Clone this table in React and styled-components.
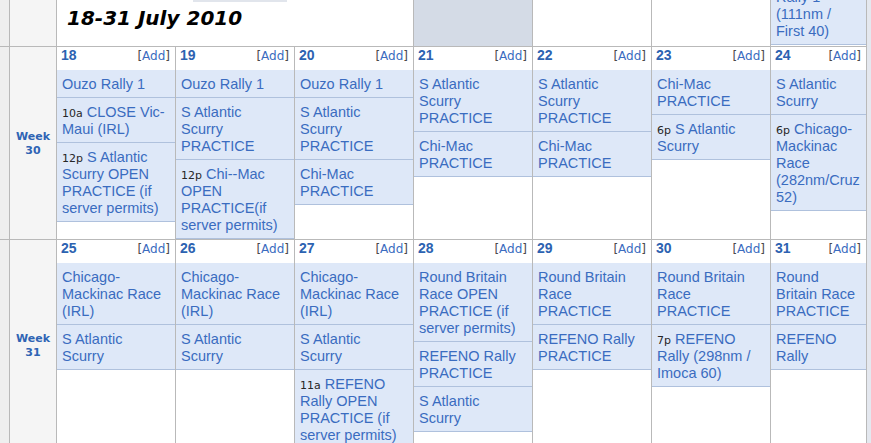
import React from "react";
import styled, { createGlobalStyle } from "styled-components";

const GlobalStyle = createGlobalStyle`
  html, body {
    margin: 0;
    padding: 0;
    background: #e4e8ef;
    overflow: hidden;
  }
`;

const weeks = [
  {
    label: "30",
    days: [
      { n: 18, ev: [["", "Ouzo Rally 1"], ["10a", "CLOSE Vic-Maui (IRL)"], ["12p", "S Atlantic Scurry OPEN PRACTICE (if server permits)"]] },
      { n: 19, ev: [["", "Ouzo Rally 1"], ["", "S Atlantic Scurry PRACTICE"], ["12p", "Chi--Mac OPEN PRACTICE(if server permits)"]] },
      { n: 20, ev: [["", "Ouzo Rally 1"], ["", "S Atlantic Scurry PRACTICE"], ["", "Chi-Mac PRACTICE"]] },
      { n: 21, ev: [["", "S Atlantic Scurry PRACTICE"], ["", "Chi-Mac PRACTICE"]] },
      { n: 22, ev: [["", "S Atlantic Scurry PRACTICE"], ["", "Chi-Mac PRACTICE"]] },
      { n: 23, ev: [["", "Chi-Mac PRACTICE"], ["6p", "S Atlantic Scurry"]] },
      { n: 24, ev: [["", "S Atlantic Scurry"], ["6p", "Chicago-Mackinac Race (282nm/Cruz 52)"]] },
    ],
  },
  {
    label: "31",
    days: [
      { n: 25, ev: [["", "Chicago-Mackinac Race (IRL)"], ["", "S Atlantic Scurry"]] },
      { n: 26, ev: [["", "Chicago-Mackinac Race (IRL)"], ["", "S Atlantic Scurry"]] },
      { n: 27, ev: [["", "Chicago-Mackinac Race (IRL)"], ["", "S Atlantic Scurry"], ["11a", "REFENO Rally OPEN PRACTICE (if server permits)"]] },
      { n: 28, ev: [["", "Round Britain Race OPEN PRACTICE (if server permits)"], ["", "REFENO Rally PRACTICE"], ["", "S Atlantic Scurry"]] },
      { n: 29, ev: [["", "Round Britain Race PRACTICE"], ["", "REFENO Rally PRACTICE"]] },
      { n: 30, ev: [["", "Round Britain Race PRACTICE"], ["7p", "REFENO Rally (298nm / Imoca 60)"]] },
      { n: 31, ev: [["", "Round Britain Race PRACTICE"], ["", "REFENO Rally"]] },
    ],
  },
];

export default function App() {
  return (
    <>
      <GlobalStyle />
      <Calendar>
        {/* tail of the previous week */}
        <Gutter />
        <WeekCell />
        <TitleCell>
          <TabStub />
          <Title>18-31 July 2010</Title>
        </TitleCell>
        <Blank $muted />
        <Blank />
        <Blank />
        <DayCell $bottom>
          <Event $narrow>
            <Time>6p</Time> Ouzo Rally 1 (111nm / First 40)
          </Event>
        </DayCell>

        {weeks.map((w) => (
          <React.Fragment key={w.label}>
            <Gutter />
            <WeekCell>
              <WeekLabel>
                Week
                <br />
                {w.label}
              </WeekLabel>
            </WeekCell>
            {w.days.map((d, i) => {
              const narrow = i === 6;
              return (
                <DayCell key={d.n}>
                  <DayHead>
                    <DayNum>{d.n}</DayNum>
                    <Add>
                      [<span>Add</span>]
                    </Add>
                  </DayHead>
                  {d.ev.map(([t, txt], j) => (
                    <Event key={j} $narrow={narrow}>
                      {t && <Time>{t}</Time>}
                      {t ? " " : ""}
                      {txt}
                    </Event>
                  ))}
                </DayCell>
              );
            })}
          </React.Fragment>
        ))}
      </Calendar>
    </>
  );
}

const Calendar = styled.div`
  display: grid;
  grid-template-columns: 9px 46px repeat(6, 118px) 95px;
  grid-template-rows: 46px auto auto;
  gap: 1px;
  background: #b9b9b9;
  padding-right: 1px;
  width: max-content;
`;

const Gutter = styled.div`
  background: #efefef;
`;

const WeekCell = styled.div`
  background: #f5f5f5;
  display: flex;
  align-items: center;
  justify-content: center;
`;

const WeekLabel = styled.div`
  font: bold 11px/14px "DejaVu Sans", Verdana, sans-serif;
  color: #2f64b4;
  text-align: center;
  padding-top: 2px;
`;

const TitleCell = styled.div`
  grid-column: span 3;
  background: #ffffff;
  display: flex;
  flex-direction: column;
`;

const TabStub = styled.div`
  width: 94px;
  height: 2px;
  margin-left: 136px;
  background: #e1e5ec;
`;

const Title = styled.h1`
  margin: 4px 0 0 10px;
  font: italic bold 20px/24px "DejaVu Sans", Verdana, sans-serif;
  color: #000;
`;

const Blank = styled.div`
  background: ${({ $muted }) => ($muted ? "#d4dbe6" : "#ffffff")};
`;

const DayCell = styled.div`
  background: #ffffff;
  display: flex;
  flex-direction: column;
  justify-content: ${({ $bottom }) => ($bottom ? "flex-end" : "flex-start")};
  overflow: hidden;
  padding-bottom: ${({ $bottom }) => ($bottom ? "1px" : "0")};
`;

const DayHead = styled.div`
  height: 23px;
  flex-shrink: 0;
  display: flex;
  justify-content: space-between;
  align-items: baseline;
  padding: 0 5px 0 4px;
`;

const DayNum = styled.span`
  font: bold 14px/17px "Liberation Sans", Arial, sans-serif;
  color: #2c62b1;
`;

const Add = styled.span`
  font: 12px/17px "DejaVu Sans", Verdana, sans-serif;
  color: #4a4a4a;

  span {
    color: #3a6cc0;
  }
`;

const Event = styled.div`
  flex-shrink: 0;
  background: #dee8f8;
  border-bottom: 1px solid #afc1dd;
  padding: 6px ${({ $narrow }) => ($narrow ? "5px" : "10px")} 4px 5px;
  font: 14.5px/17px "Liberation Sans", Arial, sans-serif;
  color: #3a6cc0;
`;

const Time = styled.span`
  font-family: "DejaVu Sans", Verdana, sans-serif;
  font-size: 11px;
  line-height: 1;
  color: #262626;
`;
